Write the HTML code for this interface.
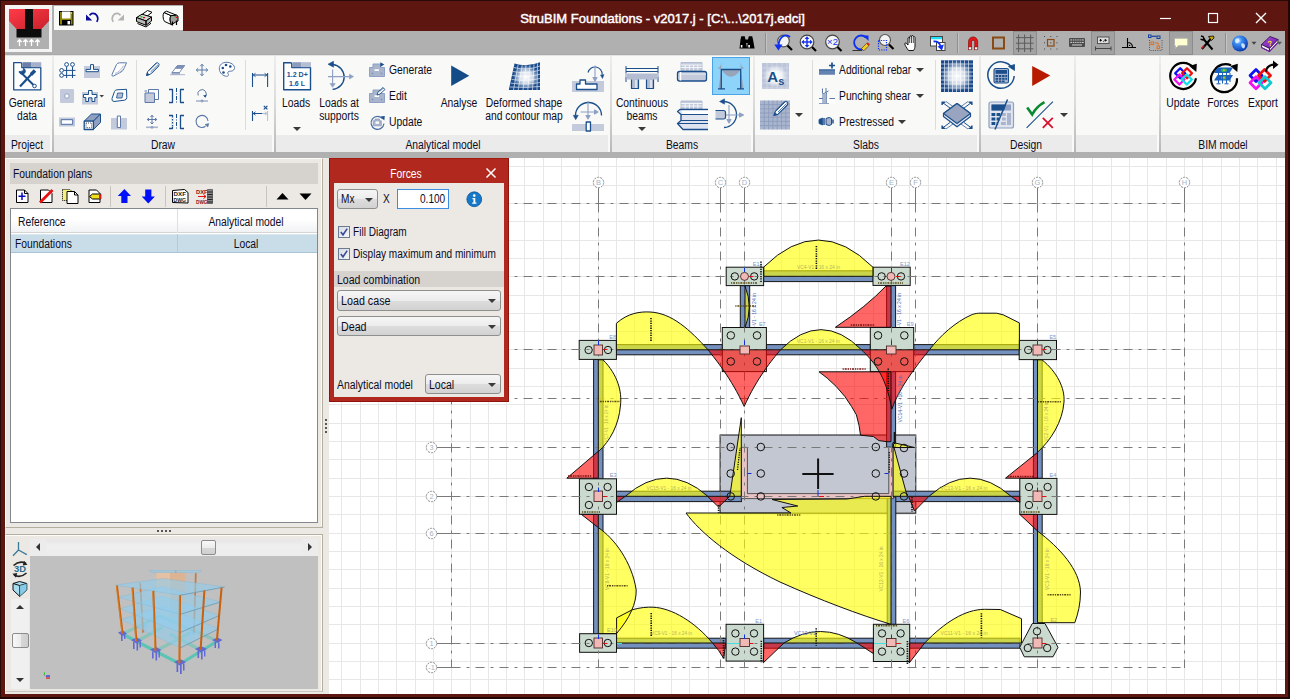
<!DOCTYPE html>
<html><head><meta charset="utf-8"><title>StruBIM Foundations</title>
<style>
*{box-sizing:border-box;margin:0;padding:0}
html,body{width:1290px;height:699px;overflow:hidden}
body{position:relative;background:#5e1611;font-family:"Liberation Sans",sans-serif;font-size:12px;color:#0c0c1e}
.a{position:absolute}
.t{position:absolute;white-space:nowrap;font-size:12px;line-height:14px;height:14px;transform:scaleX(.86);transform-origin:0 50%}
.tc{position:absolute;white-space:nowrap;font-size:12px;line-height:14px;height:14px;transform:translateX(-50%) scaleX(.86);transform-origin:50% 50%}
.gs{position:absolute;top:56px;width:2px;height:96px;background:linear-gradient(#ededed,#dadada 50%,#b9b9b9)}
.is{position:absolute;top:60px;width:1px;height:70px;background:#dcdcdc}
.gl{position:absolute;top:135px;height:17px;background:#ebebeb}
.dd{position:absolute;height:20px;border:1px solid #8e8f8f;border-radius:3px;background:linear-gradient(#f6f6f6 0%,#ececec 50%,#dddddd 51%,#d2d2d2 100%)}
.arr{position:absolute;width:0;height:0;border-left:4px solid transparent;border-right:4px solid transparent;border-top:4px solid #3a3a3a}
.hl{position:absolute;background:#a2a2a2;border:1px solid #8c8c8c}
svg{position:absolute;overflow:visible}
</style></head><body>
<!-- outer frame -->
<div class="a" style="left:0;top:0;width:1290px;height:699px;border:1px solid #2a0a08;border-right:2px solid #220604;border-bottom:2px solid #220604"></div>
<!-- gray band behind logo/toolbar -->
<div class="a" style="left:5px;top:5px;width:178px;height:50px;background:#b0b0b0"></div>
<div class="a" style="left:5px;top:31px;width:1280px;height:24px;background:#b0b0b0"></div>
<!-- logo -->
<div class="a" style="left:5px;top:5px;width:47px;height:47px;background:#f4f4f4"></div>
<div class="a" style="left:9px;top:9px;width:40px;height:40px;background:#b0b0b0"></div>
<svg style="left:9px;top:9px" width="40" height="40" viewBox="0 0 40 40">
<defs><linearGradient id="lg1" x1="0" y1="0" x2="1" y2="1"><stop offset="0" stop-color="#ff3c48"/><stop offset="1" stop-color="#c8202c"/></linearGradient></defs>
<path d="M0 0H40V12L32.5 20H7.5L0 12Z" fill="url(#lg1)"/>
<rect x="16" y="0" width="8" height="21" fill="#0c0c0c"/>
<rect x="7.5" y="20" width="25" height="8.5" fill="#0c0c0c"/>
<g stroke="#fff" stroke-width="1.3" fill="none"><path d="M10.5 37V31M8.3 33l2.2-2.4 2.2 2.4M16.5 37V31M14.3 33l2.2-2.4 2.2 2.4M22.5 37V31M20.3 33l2.2-2.4 2.2 2.4M28.5 37V31M26.3 33l2.2-2.4 2.2 2.4"/></g>
</svg>
<!-- QAT -->
<div class="a" style="left:54px;top:6px;width:129px;height:24px;background:#f9f9f7"></div>
<!-- title -->
<div class="a" id="title" style="left:519px;top:11px;width:287px;height:16px;line-height:16px;font-size:13px;color:#fff;white-space:nowrap;text-align:center;-webkit-text-stroke:0.45px #fff">StruBIM Foundations - v2017.j - [C:\...\2017j.edci]</div>
<!-- window controls -->
<svg style="left:1150px;top:8px" width="130" height="22" viewBox="1150 8 130 22" fill="none" stroke="#fff" stroke-width="1.2">
<path d="M1160 18.5H1171"/><rect x="1208.5" y="13.5" width="9" height="9"/><path d="M1256 13L1266 23M1266 13L1256 23" stroke-width="1.4"/>
</svg>
<!-- ribbon -->
<div class="a" style="left:5px;top:55px;width:1280px;height:97px;background:#f9f9f7"></div>
<div class="a" style="left:5px;top:54px;width:1280px;height:1px;background:#a9a9a9"></div><div class="a" style="left:5px;top:55px;width:1280px;height:1px;background:#e4e4e4"></div>
<!-- group label bands -->
<div class="gl" style="left:5px;width:45px"></div>
<div class="gl" style="left:54px;width:218px"></div>
<div class="gl" style="left:276px;width:332px"></div>
<div class="gl" style="left:612px;width:139px"></div>
<div class="gl" style="left:755px;width:222px"></div>
<div class="gl" style="left:981px;width:91px"></div>
<div class="gl" style="left:1076px;width:81px"></div>
<div class="gl" style="left:1161px;width:124px"></div>
<div class="gs" style="left:51.5px"></div><div class="gs" style="left:273.5px"></div><div class="gs" style="left:609.5px"></div><div class="gs" style="left:752.5px"></div><div class="gs" style="left:978.5px"></div><div class="gs" style="left:1073.5px"></div><div class="gs" style="left:1158.5px"></div>
<div class="is" style="left:136px"></div><div class="is" style="left:245px"></div><div class="is" style="left:812px"></div><div class="is" style="left:935px"></div>
<span class="tc" style="left:27px;top:138px">Project</span>
<span class="tc" style="left:163px;top:138px">Draw</span>
<span class="tc" style="left:443px;top:138px">Analytical model</span>
<span class="tc" style="left:682px;top:138px">Beams</span>
<span class="tc" style="left:866px;top:138px">Slabs</span>
<span class="tc" style="left:1026px;top:138px">Design</span>
<span class="tc" style="left:1223px;top:138px">BIM model</span>
<!-- ribbon big-button text -->
<span class="tc" style="left:27px;top:96px">General</span><span class="tc" style="left:27px;top:109px">data</span>
<span class="tc" style="left:296px;top:96px">Loads</span><div class="arr" style="left:293px;top:127px"></div>
<span class="tc" style="left:339px;top:96px">Loads at</span><span class="tc" style="left:339px;top:109px">supports</span>
<span class="t" style="left:389px;top:63px">Generate</span><span class="t" style="left:389px;top:89px">Edit</span><span class="t" style="left:389px;top:115px">Update</span>
<span class="tc" style="left:459px;top:96px">Analyse</span>
<span class="tc" style="left:524px;top:96px">Deformed shape</span><span class="tc" style="left:524px;top:109px">and contour map</span>
<span class="tc" style="left:642px;top:96px">Continuous</span><span class="tc" style="left:642px;top:109px">beams</span><div class="arr" style="left:638px;top:127px"></div>
<span class="t" style="left:839px;top:63px">Additional rebar</span><div class="arr" style="left:916px;top:68px"></div>
<span class="t" style="left:839px;top:89px">Punching shear</span><div class="arr" style="left:916px;top:94px"></div>
<span class="t" style="left:839px;top:115px">Prestressed</span><div class="arr" style="left:898px;top:120px"></div>
<div class="arr" style="left:795px;top:113px"></div><div class="arr" style="left:1060px;top:113px"></div>
<span class="tc" style="left:1183px;top:96px">Update</span><span class="tc" style="left:1223px;top:96px">Forces</span><span class="tc" style="left:1263px;top:96px">Export</span>
<!-- gray band below ribbon -->
<div class="a" style="left:5px;top:152px;width:1280px;height:6px;background:#b0b0b0"></div>
<!-- top toolbar highlight boxes -->
<div class="hl" style="left:1013px;top:31px;width:24px;height:24px"></div>
<div class="hl" style="left:1091px;top:31px;width:24px;height:24px"></div>
<div class="hl" style="left:1169px;top:31px;width:24px;height:24px"></div>
<div class="a" style="left:765px;top:33px;width:1px;height:20px;background:#8e8e8e"></div><div class="a" style="left:766px;top:33px;width:1px;height:20px;background:#c4c4c4"></div>
<div class="a" style="left:957px;top:33px;width:1px;height:20px;background:#8e8e8e"></div><div class="a" style="left:958px;top:33px;width:1px;height:20px;background:#c4c4c4"></div>
<div class="a" style="left:1225px;top:33px;width:1px;height:20px;background:#8e8e8e"></div><div class="a" style="left:1226px;top:33px;width:1px;height:20px;background:#c4c4c4"></div>
<svg style="left:0;top:0" width="1290" height="58" viewBox="0 0 1290 58">
<!-- save -->
<rect x="59.5" y="11.5" width="13.5" height="13.5" fill="#8a8200" stroke="#000" stroke-width="1"/>
<rect x="62" y="11.5" width="8.5" height="7" fill="#fff"/><rect x="62" y="20" width="9" height="5" fill="#000"/><rect x="67.5" y="21" width="2.6" height="3.4" fill="#fff"/><rect x="71" y="12.5" width="1" height="1" fill="#fff"/>
<!-- undo -->
<path d="M96.8 21.8C99.5 17 96 12.6 91.6 13.6L89.5 15.2" fill="none" stroke="#0c0c9c" stroke-width="1.7"/><path d="M86 14.5V20.6H92.3Z" fill="#0c0c9c"/>
<!-- redo -->
<path d="M113.2 21.8C110.5 17 114 12.6 118.4 13.6L120.5 15.2" fill="none" stroke="#b4b4b4" stroke-width="1.7"/><path d="M124 14.5V20.6H117.7Z" fill="#b4b4b4"/>
<!-- printer -->
<g stroke="#000" stroke-width="1" stroke-linejoin="round">
<path d="M142 14.5L147.5 10.5L152 12.3L146.5 16.6Z" fill="#fff"/>
<path d="M136.5 17.5L142 14.2L151.5 17L146 21Z" fill="#d8d8d8"/>
<path d="M136.5 17.5V21.5L146 25.3V21ZM146 21V25.3L151.5 21V17Z" fill="#b8b8b8"/>
<path d="M137.5 23.5L146 27L151 23.2" fill="none"/>
</g>
<rect x="140.5" y="16.2" width="2" height="1.2" fill="#00c000"/><rect x="143" y="17" width="2" height="1.2" fill="#e00000"/>
<!-- plotter -->
<g stroke="#000" stroke-width="1" stroke-linejoin="round">
<path d="M164 12.5C162.5 14 162.8 19.5 164.6 21.5L171.5 24.6C169.8 22.5 169.6 17.5 171 15.6Z" fill="#fff"/>
<path d="M164 12.5L166.5 11.2L176.5 15.2L171 15.6Z" fill="#fff"/>
<path d="M171 15.6L176.5 15.2L178 16.2V21L175.5 22.2L171.5 24.6C169.8 22.5 169.6 17.5 171 15.6Z" fill="#a0a0a0"/>
<path d="M172.5 21.5V25.5M176.5 20.5V25" fill="none" stroke-width="1.2"/>
</g>
<rect x="174.6" y="16.2" width="1.5" height="1.2" fill="#00c000"/><rect x="176" y="16.8" width="1.3" height="1.2" fill="#e00000"/>
<!-- binoculars -->
<g fill="#000"><path d="M741.3 36.300h3.400l.8 3.200 1.600 9h-7.600l1-9zM748.800 36.300h3.400l.8 3.200 1.600 9H747l1-9z"/><rect x="744.500" y="39.500" width="5" height="3.500"/></g>
<rect x="740.800" y="45" width="1.600" height="2.500" fill="#fff"/><rect x="748.300" y="45" width="1.600" height="2.500" fill="#fff"/>
<!-- zoom previous -->
<circle cx="783.5" cy="41" r="5.8" fill="#f4f4f4" stroke="#555" stroke-width="1.2"/><path d="M787.5 45.5L792 50" stroke="#000" stroke-width="2.2"/>
<path d="M790 37C786 33.5 779.5 36 778.5 45" fill="none" stroke="#1030f0" stroke-width="1.8"/><path d="M774.3 44.5H782.5L778.4 50.5Z" fill="#1030f0"/>
<!-- zoom extents -->
<circle cx="807" cy="42" r="6.8" fill="#f4f4f4" stroke="#444" stroke-width="1.2"/><path d="M812 47L816 51" stroke="#000" stroke-width="2.2"/>
<g fill="#1030f0"><path d="M807 36.3l2.3 2.7h-4.6zM807 47.7l2.3-2.7h-4.6zM801.3 42l2.7-2.3v4.6zM812.7 42l-2.7-2.3v4.6z"/><rect x="806.3" y="38.5" width="1.4" height="7"/><rect x="803.5" y="41.3" width="7" height="1.4"/></g>
<!-- zoom x2 -->
<circle cx="832.5" cy="42" r="6.8" fill="#f4f4f4" stroke="#444" stroke-width="1.2"/><path d="M837.5 47L841.5 51" stroke="#000" stroke-width="2.2"/>
<text x="832.5" y="45.3" font-size="9.5" fill="#1030f0" text-anchor="middle" font-family="Liberation Sans">×2</text>
<!-- redraw -->
<path d="M866 37.5A7 7 0 1 0 866.5 47" fill="none" stroke="#1030f0" stroke-width="1.8"/><path d="M863 35.5H868.5V41Z" fill="#1030f0"/>
<path d="M852.5 50.5H862" stroke="#333" stroke-width="1"/><path d="M861.5 48.5L866.5 43.5L868.8 45.8L863.8 50.8Z" fill="#f0d020" stroke="#604000" stroke-width=".7"/><path d="M866.5 43.5l1.2-1.2 2.3 2.3-1.2 1.2z" fill="#e02020"/>
<!-- zoom window -->
<circle cx="885" cy="40" r="5.5" fill="#f4f4f4" stroke="#555" stroke-width="1.2"/><path d="M889 44.5L893.5 49" stroke="#000" stroke-width="2.2"/>
<rect x="878.5" y="40.5" width="8" height="9.5" fill="none" stroke="#1030f0" stroke-width="1.2" stroke-dasharray="1.2 1.2"/>
<!-- hand -->
<path d="M908.5 50.5C906.5 47.5 905 45.5 904.8 44C904.6 42.8 906 42.6 906.8 43.6L908 45V38.5C908 37.2 909.6 37.2 909.7 38.5V36.8C909.8 35.6 911.4 35.6 911.5 36.8V36.3C911.6 35.2 913.2 35.2 913.3 36.4V37.3C913.4 36.3 914.9 36.3 915 37.5V46C915 48 914.2 49.5 913.5 50.5Z" fill="#fff" stroke="#000" stroke-width=".9" stroke-linejoin="round"/>
<path d="M909.7 38.5V43M911.5 37V43M913.3 37.5V43" stroke="#000" stroke-width=".7" fill="none"/>
<!-- window arrow -->
<rect x="930.5" y="36.5" width="12" height="9.5" fill="#fff" stroke="#444" stroke-width="1"/><rect x="931" y="37" width="11" height="2.3" fill="#20e0ff"/>
<rect x="936.5" y="42.5" width="8.5" height="8" fill="#fff" stroke="#444" stroke-width="1"/>
<path d="M933.5 41.5C937 41 939.5 43 940.5 46" fill="none" stroke="#1030f0" stroke-width="1.8"/><path d="M937.5 46.5L943.8 44.6L942 50.5Z" fill="#1030f0"/>
<!-- magnet -->
<path d="M968.5 49.5V41.5A4.6 4.6 0 0 1 977.7 41.5V49.5H974.7V41.8A1.6 1.6 0 0 0 971.5 41.8V49.5Z" fill="#e01818" stroke="#800000" stroke-width=".6"/><rect x="968.5" y="47" width="3" height="2.8" fill="#fff" stroke="#800000" stroke-width=".5"/><rect x="974.7" y="47" width="3" height="2.8" fill="#fff" stroke="#800000" stroke-width=".5"/>
<!-- square -->
<rect x="993" y="37.5" width="11" height="11" fill="none" stroke="#8a4a14" stroke-width="2"/>
<!-- grid -->
<path d="M1018.6 34.5V52M1024.6 34.5V52M1030.6 34.5V52M1016 37.6H1033.5M1016 43.2H1033.5M1016 48.8H1033.5" stroke="#5c5c5c" stroke-width="1" fill="none"/>
<!-- dotted square -->
<rect x="1047.5" y="39.5" width="6.5" height="6.5" fill="none" stroke="#8a4a14" stroke-width="1.2"/><rect x="1050.2" y="42.2" width="1.2" height="1.2" fill="#8a4a14"/>
<g fill="#444"><rect x="1044" y="36" width="1" height="1"/><rect x="1050.3" y="36" width="1" height="1"/><rect x="1056.5" y="36" width="1" height="1"/><rect x="1044" y="42.3" width="1" height="1"/><rect x="1056.5" y="42.3" width="1" height="1"/><rect x="1044" y="48.5" width="1" height="1"/><rect x="1050.3" y="48.5" width="1" height="1"/><rect x="1056.5" y="48.5" width="1" height="1"/></g>
<!-- keyboard -->
<rect x="1069" y="38" width="16" height="9" rx="1" fill="#4c4c4c"/><g fill="#c8c8c8"><rect x="1070.3" y="39.4" width="13.4" height="1.1"/><rect x="1070.3" y="41.9" width="13.4" height="1.1"/><rect x="1072" y="44.4" width="10" height="1.1"/></g>
<g stroke="#4c4c4c" stroke-width=".8"><path d="M1072.5 39v4.5M1074.7 39v4.5M1076.9 39v4.5M1079.1 39v4.5M1081.3 39v4.5"/></g>
<!-- dimension -->
<rect x="1097.5" y="37" width="11.5" height="6.5" fill="#dcdcdc" stroke="#555" stroke-width="1"/><path d="M1100.5 39v2.5M1099.5 40.3h2.5M1103 41.3h.8M1105.3 39v2.5M1104.4 40.3h2.5" stroke="#000" stroke-width=".9"/>
<path d="M1095.5 48.5H1111M1095.5 46.5v4M1111 46.5v4" stroke="#444" stroke-width="1" fill="none"/>
<!-- angle -->
<path d="M1122 47.5H1136M1127.5 38v9.5M1127.5 42.5C1130.5 42.5 1132.5 44.5 1132.5 47.5" stroke="#000" stroke-width="1.1" fill="none"/><rect x="1129" y="44.8" width="1.2" height="1.2" fill="#000"/>
<!-- ortho -->
<rect x="1148.5" y="35" width="2.5" height="2.5" fill="none" stroke="#1040a0" stroke-width="1"/><rect x="1157" y="36" width="3" height="2.5" fill="none" stroke="#1040a0" stroke-width="1"/><path d="M1151.5 36.3h5" stroke="#1040a0" stroke-width="1.2"/>
<rect x="1151" y="42" width="2.6" height="2.6" fill="none" stroke="#e07020" stroke-width="1"/><rect x="1157" y="46" width="2.6" height="2.6" fill="none" stroke="#e07020" stroke-width="1"/><path d="M1155 43h3.2v2" stroke="#e07020" stroke-width="1" fill="none"/>
<path d="M1149.5 40v10.5H1162" stroke="#555" stroke-width="1" stroke-dasharray="1 1.3" fill="none"/><path d="M1162 40v10.5" stroke="#555" stroke-width="1" stroke-dasharray="1 1.3" fill="none"/>
<!-- speech -->
<path d="M1175.5 38.2H1186.8Q1187.8 38.2 1187.8 39.2V44.8Q1187.8 45.8 1186.8 45.8H1178.5L1175.3 48.6V45.8Q1174.5 45.6 1174.5 44.8V39.2Q1174.5 38.2 1175.5 38.2Z" fill="#ffffd2" stroke="#b0b0b0" stroke-width="1"/>
<!-- tools -->
<path d="M1202 49L1211 38.5" stroke="#000" stroke-width="2"/><path d="M1208.5 36.5L1213.5 36L1214 38L1211.5 40.5Z" fill="#c8a800" stroke="#000" stroke-width=".8"/>
<path d="M1212.5 49.5L1203.5 39" stroke="#000" stroke-width="2"/><path d="M1201 36l2 .5 1 2-1.5 1.5-2-.8M1203 40l1.8-1.6" stroke="#000" stroke-width="1.4" fill="none"/>
<path d="M1204 45.5L1201.5 48.5" stroke="#d02020" stroke-width="1.6"/>
<!-- globe -->
<defs><radialGradient id="gl" cx=".38" cy=".32" r=".7"><stop offset="0" stop-color="#c8e4ff"/><stop offset=".35" stop-color="#3c8cf0"/><stop offset="1" stop-color="#0838b0"/></radialGradient>
<linearGradient id="bk" x1="0" y1="0" x2="1" y2="1"><stop offset="0" stop-color="#b050e0"/><stop offset="1" stop-color="#6018a0"/></linearGradient></defs>
<circle cx="1240" cy="43.5" r="8" fill="url(#gl)"/><path d="M1235.5 39c2-1 3.5-.5 4 1s-1 3-2.5 3.200-2.500-2-1.500-4.200zM1241.500 43.500c2-.5 3.500 .5 3.500 2.500s-1.500 3-2.500 2-1.800-3.500-1-4.500z" fill="#e8f4ff" opacity=".85"/>
<path d="M1251.500 41.800h5l-2.500 3z" fill="#444"/>
<!-- book -->
<path d="M1261.500 44.500L1270 36.500L1278 39.500L1269.500 48.500Z" fill="url(#bk)" stroke="#30084c" stroke-width=".8" stroke-linejoin="round"/>
<path d="M1261.500 44.500V47.500L1269.500 51.500V48.500ZM1269.500 48.500V51.500L1278 42.500V39.500Z" fill="#f0f0f0" stroke="#30084c" stroke-width=".8" stroke-linejoin="round"/>
<path d="M1261.500 47.500L1269.500 51.500L1278 42.500" fill="none" stroke="#7020a8" stroke-width="1.2"/>
<text x="1270" y="46" font-size="7.500" font-weight="bold" fill="#ffe020" text-anchor="middle" font-family="Liberation Sans" transform="rotate(-12 1270 44)">?</text>
<path d="M1277 41.800h5l-2.500 3z" fill="#555"/>
</svg>
<svg style="left:0;top:55px" width="620" height="100" viewBox="0 55 620 100">
<defs>
<radialGradient id="glow" cx=".5" cy=".5" r=".5"><stop offset="0" stop-color="#fff" stop-opacity="1"/><stop offset=".5" stop-color="#fff" stop-opacity=".8"/><stop offset="1" stop-color="#fff" stop-opacity="0"/></radialGradient>
</defs>
<g fill="none" stroke="#1b4f8c" stroke-width="1.3" stroke-linejoin="round" stroke-linecap="butt">
<!-- General data folder -->
<path d="M13.700 62.700H20.500Q21.800 62.700 21.800 64V67.600H40.800V89.800H13.700Z" fill="#fff"/>
<rect x="22.500" y="62.200" width="9" height="5" fill="#6c7fa9" stroke="none"/><rect x="31.500" y="62.200" width="9.800" height="5" fill="#a5b0ca" stroke="none"/>
<!-- wrench + screwdriver -->
<path d="M20 86.500L33 72.500" stroke-width="2.200"/><path d="M31 74.500L35 70.500" stroke-width="3.600"/>
<path d="M21 72.500L34 85.500" stroke-width="2"/>
<path d="M19 71.500a3.200 3.200 0 1 0 4.500-3.300l-.3 2.500-2 .7z" fill="#1b4f8c" stroke-width=".8"/><circle cx="34.500" cy="86" r="1.800" fill="#fff" stroke-width="1"/>
<!-- grid with circles -->
<g stroke-width="1"><path d="M66.600 66.500V78M72.500 66.500V78M63.500 70.400H75.500M63.500 75.400H75.500"/><circle cx="66.600" cy="64.500" r="1.900" fill="#fff"/><circle cx="72.500" cy="64.500" r="1.900" fill="#fff"/><circle cx="61.600" cy="70.400" r="1.900" fill="#fff"/><circle cx="61.600" cy="75.400" r="1.900" fill="#fff"/></g>
<!-- footing strip -->
<rect x="84" y="66" width="16" height="12" fill="#c3cadb" stroke="none"/><path d="M86 71.700V69.400H90.600V64.600H93.500V69.400H98.400V71.700Z" fill="#fff" stroke-width="1"/>
<!-- slab sketch -->
<g stroke-width="1" stroke="#5b78a8"><path d="M112 74.500L116.500 64.500Q117.500 62.800 119.500 62.800H126.500L124 68.500Q123 71 121 72L113.500 76Q111.500 76.500 112 74.500Z" fill="#fff"/><path d="M115 73.500C119 72 121.500 69.500 123.500 65.500M116.500 74C120 72.500 122.500 70.500 124.500 67" stroke="#b4bdd2"/></g>
<!-- pile square -->
<rect x="60" y="89" width="14" height="14" rx="1" fill="#c3cadb" stroke="none"/><circle cx="66.900" cy="96" r="2.200" fill="#fff" stroke="#8ea0c4" stroke-width="1"/>
<!-- footing cross -->
<rect x="82" y="92" width="16" height="12.500" fill="#c3cadb" stroke="none"/><path d="M88.500 90.500H92V94.500H96.800V97.500H94.800V101.500H92V97.800H88.500V101.500H85.800V97.500H83.500V94.500H88.500Z" fill="#fff" stroke-width="1"/>
<path d="M99.500 95h4.500l-2.250 2.600z" fill="#444" stroke="none"/>
<!-- slab with square -->
<g stroke-width="1"><path d="M112 98.500L114.500 91.500Q115 90 117 89.800L126.500 89.300L126.800 97.500Q126.500 100 124.500 100.200L114 101.500Q111.500 101.200 112 98.500Z" fill="#fff"/><path d="M117.500 93H123L122 98H116.500Z" fill="#b4bdd2" stroke-width=".8"/></g>
<!-- bar -->
<rect x="59" y="117.500" width="16" height="9" fill="#c3cadb" stroke="none"/><rect x="61.200" y="119.700" width="11.500" height="4.600" fill="#fff" stroke-width="1" stroke="#4a6ea4"/>
<!-- 3D box -->
<path d="M84.200 121.200L91.500 114H100.500L93.400 121.200Z" fill="#8f9fc0" stroke-width="1"/><path d="M93.400 121.200L100.500 114V122.500L93.400 129.500Z" fill="#8f9fc0" stroke-width="1"/>
<rect x="84.200" y="121.200" width="9.200" height="8.300" fill="#fff" stroke-width="1.300"/><rect x="86" y="123" width="5.600" height="4.700" fill="none" stroke="#222" stroke-width=".8" stroke-dasharray="1 1"/>
<!-- wall -->
<rect x="111" y="118" width="16" height="11.500" fill="#c3cadb" stroke="none"/><rect x="117.300" y="116" width="3.200" height="11.500" fill="#fff" stroke="#5b78a8" stroke-width="1"/>
<!-- pencil -->
<path d="M146.500 75.500L147.800 71.300L156 63.200Q157.500 62.200 158.600 63.400Q159.600 64.600 158.600 66L150.500 74.200Z" fill="#fff" stroke-width="1"/><path d="M146.500 75.500L147.300 72.800L149.200 74.700Z" fill="#1b4f8c" stroke-width=".6"/><path d="M149 70.500L156.500 63.200M150.500 72L158 64.700M151.800 73.300L158.800 66.200" stroke-width=".7"/>
<!-- eraser -->
<g stroke="#7d8fb6" stroke-width="1"><path d="M172 72.500L177.500 65.500H184.500L179.500 72.500Z" fill="#fff"/><path d="M177.500 65.500H184.500L182.500 68.300H175.300Z" fill="#7d8fb6"/><path d="M170 74.700H185" stroke="#a9b4cd"/><path d="M172 72.500V73.800H179.500V72.500" fill="none"/></g>
<!-- move arrows -->
<g stroke="#5b78a8" stroke-width="1"><path d="M202 64.500V75.500M196.500 70H207.500"/><path d="M200.300 66.200L202 64.200L203.700 66.200M200.300 73.800L202 75.800L203.700 73.800M198.200 68.300L196.200 70L198.200 71.700M205.800 68.300L207.800 70L205.800 71.700"/></g>
<!-- palette -->
<path d="M227 62.300C222.500 62 219 65 219.300 69C219.600 73 223 76 226.500 76.300C228.500 76.400 229 75 228 73.800C227 72.300 228.500 71 230.500 71.200C233 71.300 234.800 69.500 234.500 67.300C234 64.300 230.800 62.500 227 62.300Z" fill="#fff" stroke="#5b78a8" stroke-width="1"/>
<g fill="#1b4f8c" stroke="none"><circle cx="222.800" cy="68" r="1.300"/><circle cx="226" cy="65" r="1.300"/><circle cx="230.300" cy="66.500" r="1.300"/><circle cx="223.500" cy="72.500" r="1.300"/></g>
<!-- copy -->
<g stroke="#5b78a8" stroke-width="1"><rect x="148.500" y="89.500" width="10" height="10" fill="#fff"/><rect x="145" y="93" width="9.500" height="9.500" fill="#c3cadb"/><path d="M144.500 91h2.500" /></g>
<!-- mirror 1 -->
<g stroke-width="1.300"><path d="M169 89.500H172.500V102.500H169M184 89.500H180.500V102.500H184"/><path d="M176.500 88V104" stroke-dasharray="4 1.500 1 1.500" stroke-width="1"/></g>
<!-- rotate base -->
<g stroke="#5b78a8" stroke-width="1"><path d="M198.200 95.500A4.200 4.200 0 1 1 205 96.800"/><path d="M203.500 95.500L205.300 97.300L206.300 94.800" fill="#1b4f8c" stroke="#1b4f8c" stroke-width=".8"/><path d="M196 101H208" stroke="#a9b4cd" stroke-width="1.600"/><circle cx="202" cy="101" r="1.400" fill="#8ea0c4" stroke="none"/></g>
<!-- move base -->
<g stroke="#5b78a8" stroke-width="1"><path d="M152 115.500V123M147.500 119.500H156.500"/><path d="M150.500 117L152 115.200L153.500 117M149 118L147.200 119.500L149 121M155 118L156.800 119.500L155 121M150.500 122.300L152 124L153.500 122.300"/><path d="M146 127.300H158" stroke="#a9b4cd" stroke-width="1.600"/><circle cx="152" cy="127.300" r="1.400" fill="#8ea0c4" stroke="none"/></g>
<!-- mirror 2 -->
<g stroke-width="1.300"><path d="M169 115.500H172.500V128.500H169M184 115.500H180.500V128.500H184"/><path d="M172.500 117.500V127" stroke="#f9f9f7" stroke-width="1.500" stroke-dasharray="1.500 1.500"/><path d="M176.500 114V130" stroke-dasharray="4 1.500 1 1.500" stroke-width="1"/></g>
<!-- rotate -->
<g stroke="#5b78a8" stroke-width="1.100"><path d="M205.500 126.300A6 6 0 1 1 208 121"/><path d="M205 124.500L207.800 127L208.800 123.600Z" fill="#5b78a8" stroke-width=".6"/></g>
<!-- dims -->
<g stroke-width="1.100"><path d="M252.500 73V87M267.600 73V87M253 75H267"/><path d="M255.500 73.300L253.200 75L255.500 76.700M264.600 73.300L266.900 75L264.600 76.700" stroke-width=".9"/>
<path d="M252.500 111V121M253 113.500H262.500"/><path d="M255.500 111.800L253.200 113.500L255.500 115.200" stroke-width=".9"/><path d="M267.600 111V121M262.500 113.500H267M264.800 111.800L267 113.500L264.800 115.200" stroke="#b4bdd2" stroke-width="1"/><path d="M263.800 105.800L267.400 109.400M267.400 105.800L263.800 109.400" stroke-width="1.200"/></g>
<!-- Loads folder -->
<path d="M283.700 62.700H290.500Q291.800 62.700 291.800 64V67.600H310.500V89.800H283.700Z" fill="#fff" stroke-width="1.400"/>
<rect x="292.500" y="62.200" width="9" height="5" fill="#8d9bbd" stroke="none"/><rect x="301.500" y="62.200" width="9.500" height="5" fill="#b4bdd2" stroke="none"/>
<!-- Loads at supports -->
<path d="M333 64.500A12.500 12.500 0 0 1 332.500 89.400" stroke-width="1.400"/><path d="M328 64.200L333.500 61.300V67.200Z" fill="#1b4f8c" stroke-width=".6"/>
<g stroke="#8ea0c4" stroke-width="1.100"><path d="M332.600 69.500V84.500M328 76.600H350"/><path d="M330 83.500H335.200L332.600 87.300ZM349.500 74.200V79L353.500 76.600Z" fill="#8ea0c4" stroke-width=".6"/></g>
<!-- Generate -->
<g stroke="#8ea0c4" stroke-width="1"><path d="M369.500 67.500H373V64H380.500V67.500H384.500V76.500H369.500Z" fill="#a9b4cd"/><rect x="374.500" y="69.300" width="4.500" height="1.700" fill="#fff" stroke="none"/><path d="M371.500 73.500l2 0M380.500 73.500l2 0M372.500 72.500v2M381.500 72.500v2" stroke="#8194bb" stroke-width=".8"/></g><path d="M380.300 62.300V67L384.300 64.600Z" fill="#1b4f8c" stroke="none"/>
<!-- Edit -->
<g stroke="#8ea0c4" stroke-width="1"><path d="M369.500 93.500H373V90H380.500V93.500H384.500V102.500H369.500Z" fill="#a9b4cd"/><rect x="374.500" y="95.300" width="4.500" height="1.700" fill="#fff" stroke="none"/><path d="M371.500 99.500l2 0M380.500 99.500l2 0M372.500 98.500v2M381.500 98.500v2" stroke="#8194bb" stroke-width=".8"/></g>
<path d="M377 95L378 92L383 87.500L385 89.500L380 94Z" fill="#fff" stroke="#1b4f8c" stroke-width=".9"/><path d="M379.500 91.500L384 87.800" stroke-width=".6"/>
<!-- Update -->
<path d="M382.800 119A6.500 6.500 0 1 0 384 123.500" stroke="#4a6ea4" stroke-width="1.200"/><path d="M380.500 116.500L384.800 116L384.300 120.500Z" fill="#1b4f8c" stroke="none"/>
<g stroke="#8ea0c4" stroke-width=".8"><path d="M373.200 120.800H375V119H379.500V120.800H381.300V125.800H373.200Z" fill="#a9b4cd"/><rect x="375.500" y="121.500" width="3.500" height="2.300" fill="#fff" stroke="none"/></g>
<!-- Analyse -->
<path d="M451.200 65.600V86L469.300 75.700Z" fill="#134c86" stroke="none"/>
<!-- Deformed shape -->
<path d="M514.500 63.600Q527 67.500 540 62.300V90H508.800Z" fill="#1a4a8a" stroke="none"/>
<g stroke="#dfe8f4" stroke-width=".8" opacity=".9"><path d="M518.200 64.500L513.500 90M522.200 65.200L518.200 90M526 65.400L523 90M530 65.200L527.800 90M534 64.300L532.500 90M537.500 63.300L537 90"/><path d="M513.800 67.500Q527 71 540 66M513 71.500Q527 74.500 540 70M512.200 75.500Q527 78 540 74.200M511.500 79.500Q527 81.500 540 78.500M510.800 83.200Q527 85 540 82.500M510 87Q527 88 540 86.500"/></g>
<ellipse cx="526" cy="77" rx="13" ry="12" fill="url(#glow)" stroke="none"/>
<!-- footing rotate icons -->
<rect x="572" y="81" width="32" height="11" fill="#c3cadb" stroke="none"/><path d="M576.500 89.500V84H580V80H585.500V84H597V89.500Z" fill="#fff" stroke-width="1.300"/>
<path d="M588 72.500A7.200 7.200 0 0 1 602.200 74.500" stroke-width="1.100"/><path d="M600.500 75L602.500 78.500L604 74.600Z" fill="#1b4f8c" stroke-width=".5"/>
<path d="M595 65.500V80M593 77.500H597L595 81Z" stroke="#8ea0c4" stroke-width="1.100" fill="#8ea0c4"/>
<rect x="572" y="124" width="32" height="7" fill="#c3cadb" stroke="none"/><rect x="586.200" y="122" width="4.300" height="9" fill="#fff" stroke-width="1.300"/>
<path d="M575.500 115.500A13 13 0 0 1 601.500 115.500" stroke-width="1.300"/><path d="M573.200 115.300H578.300L575.700 119.800Z" fill="#1b4f8c" stroke-width=".5"/>
<g stroke="#8ea0c4" stroke-width="1.100" fill="#8ea0c4"><path d="M588 101V117M586 115.500H590L588 119Z"/><path d="M580.500 112H595M594.500 110V114L598 112Z"/></g>
</g>
<g font-family="Liberation Sans" font-weight="bold" font-size="6.400" fill="#1b4f8c" text-anchor="middle"><text x="297.300" y="77.200" textLength="21" lengthAdjust="spacingAndGlyphs">1.2 D+</text><text x="297" y="85.600" textLength="16" lengthAdjust="spacingAndGlyphs">1.6 L</text></g>
</svg>
<div class="a" style="left:712px;top:57px;width:38px;height:38px;background:#8dd3fa;border:1px solid #4aa3e4"></div>
<svg style="left:610px;top:55px" width="680" height="100" viewBox="610 55 680 100">
<defs>
<radialGradient id="glow2" cx=".5" cy=".5" r=".5"><stop offset="0" stop-color="#fff" stop-opacity="1"/><stop offset=".5" stop-color="#fff" stop-opacity=".8"/><stop offset="1" stop-color="#fff" stop-opacity="0"/></radialGradient>
</defs>
<g fill="none" stroke="#1b4f8c" stroke-width="1.200" stroke-linejoin="round">
<!-- continuous beams -->
<path d="M626 68.500H658M626 71.500H658" stroke-width="1"/><path d="M626 66V82M658 66V82" stroke-width="1" stroke-dasharray="7.500 1 1 1"/>
<path d="M626.500 73.500H657.500V79.500H653.500V88.500H646.500V79.500H638.500V88.500H631.500V79.500H626.500Z" fill="#b4bdd2" stroke="none"/>
<path d="M631.500 79.500V88.500H638.500V79.500M646.500 79.500V88.500H653.500V79.500" stroke-width="1.200"/><path d="M636 80V88M651 80V88" stroke="#e8ecf4" stroke-width="1.500"/>
<!-- table + beam -->
<rect x="681" y="62.500" width="21" height="8" fill="#c3cadb" stroke="#a9b4cd" stroke-width=".8"/><path d="M681 65H702M681 67.500H702M685.200 65V70.500M689.400 65V70.500M693.600 65V70.500M697.800 65V70.500" stroke="#fff" stroke-width=".8"/>
<rect x="677.500" y="71.500" width="29" height="9.500" rx="2" fill="#c3cadb" stroke-width="1.300"/><path d="M680.500 72V80.500" stroke="#fff" stroke-width="1.500"/><path d="M681 74H706" stroke="#e8ecf4" stroke-width="1"/>
<!-- portal frame (highlighted) -->
<path d="M716 67.500Q720.500 69.500 721.300 62L721.300 69.500ZM746 67.500Q741.500 69.500 740.700 62L740.700 69.500Z" fill="#98a4b8" stroke="none"/><path d="M721.300 69.500Q731 84 740.700 69.500Z" fill="#98a4b8" stroke="none"/>
<path d="M721.300 69.500L718.500 88.500H721.300ZM740.700 69.500L743.500 88.500H740.700Z" fill="#98a4b8" stroke="none"/>
<path d="M721.300 88.500V69.500H740.700V88.500M718 88.800H725M737 88.800H744" stroke-width="1.300"/>
<!-- table + I beam -->
<rect x="681" y="101" width="21" height="8" fill="#c3cadb" stroke="#a9b4cd" stroke-width=".8"/><path d="M681 103.500H702M681 106H702M685.200 103.500V109M689.400 103.500V109M693.600 103.500V109M697.800 103.500V109" stroke="#fff" stroke-width=".8"/>
<path d="M708 109.500H680L677.500 111.500L681 114.500V120.500L677.500 123.500L683 129.500H708" fill="#dfe4ee" stroke-width="1.300"/><path d="M708 114.500H681M708 120.500H681M677.500 123.500H708" stroke-width="1"/><path d="M681.500 110.500H708V114H682.500Z" fill="#fff" stroke="none"/>
<!-- beam arc -->
<path d="M723 101.500A13 13 0 0 1 724 127.500" stroke-width="1.300"/><path d="M719.500 101.500L724.500 98.800V104.200Z" fill="#1b4f8c" stroke-width=".5"/>
<g stroke="#8ea0c4" stroke-width="1.100" fill="#8ea0c4"><path d="M729 105V121M727 119.500H731L729 123Z"/><path d="M724 115H740M739.500 113V117L743.500 115Z"/></g>
<path d="M715.500 110.500H723.500Q725.500 110.500 725.500 112.500V117.500Q725.500 119 723.500 119H715.500" fill="#c3cadb" stroke-width="1.200"/>
<!-- As -->
<rect x="762" y="63" width="27" height="26" fill="#bcc5d9" stroke="none"/><g stroke="#d4dae8" stroke-width=".8"><path d="M767 63V89M772 63V89M777 63V89M782 63V89M787 63V89M762 68H789M762 73H789M762 78H789M762 83H789M762 88H789"/></g><ellipse cx="775.500" cy="76" rx="12" ry="11" fill="url(#glow2)" stroke="none"/>
<!-- grid pencil -->
<rect x="760" y="100.500" width="30" height="29" fill="#a9b4cd" stroke="none"/><g stroke="#8c9abc" stroke-width=".8"><path d="M764.300 100.500V129.500M768.600 100.500V129.500M772.900 100.500V129.500M777.200 100.500V129.500M781.500 100.500V129.500M785.800 100.500V129.500M760 104.600H790M760 108.800H790M760 113H790M760 117.200H790M760 121.400H790M760 125.600H790"/></g>
<path d="M774 115.500L775.300 111.300L784.500 102Q786 101 787.300 102.200Q788.400 103.500 787.300 105L778 114.200Z" fill="#fff" stroke-width="1.100"/><path d="M774 115.500L775 112.500L777 114.500Z" fill="#1b4f8c" stroke-width=".6"/><path d="M776.500 110.500L785 102M778 112L786.500 103.500" stroke-width=".7"/>
<!-- additional rebar -->
<rect x="819" y="69.500" width="16" height="5.300" fill="#8ea0c4" stroke="none"/><path d="M819 70H835" stroke-width="1.100"/><path d="M820 71V74.500M822 71V74.500M824 71V74.500M826 71V74.500M828 71V74.500M830 71V74.500M832 71V74.500M834 71V74.500" stroke-width=".7"/><path d="M832 62.500V68.500M829 65.500H835" stroke-width="1.700"/>
<!-- punching shear -->
<rect x="819" y="99" width="16" height="4.500" fill="#fff" stroke="none"/><path d="M819 98.500H823V93.500M829.500 98.500H835M823 98.500V103M826.500 93V103" stroke="#5b78a8" stroke-width="1"/><path d="M822.500 88.500V93.500M826 88V93.500M823 94L828.500 91" stroke="#5b78a8" stroke-width="1"/><path d="M819 103.500H829" stroke="#8ea0c4" stroke-width="1"/><rect x="823.500" y="94" width="3" height="9" fill="#a9b4cd" stroke="none"/>
<!-- prestressed -->
<path d="M819 119.500L822.500 118V125L819 123.500Z" fill="#1b4f8c" stroke-width=".8"/><rect x="823" y="118" width="2" height="7" fill="#5b78a8" stroke="none"/><path d="M826 118.500Q829.500 116.500 831.500 118.500V124.500Q829.500 126.500 826 124.500Z" fill="#a9b4cd" stroke-width="1"/><rect x="832" y="119.500" width="2" height="4" fill="#5b78a8" stroke="none"/>
<!-- slab grid -->
<rect x="941" y="60.300" width="32" height="31.700" fill="#1a4a8c" stroke="none"/><g stroke="#e4ebf6" stroke-width=".7"><path d="M944.500 60.300V92M948.500 60.300V92M952.500 60.300V92M956.500 60.300V92M960.500 60.300V92M964.500 60.300V92M968.500 60.300V92M941 64H973M941 68H973M941 72H973M941 76H973M941 80H973M941 84H973M941 88H973"/></g><ellipse cx="957" cy="76" rx="15.500" ry="15.500" fill="url(#glow2)" stroke="none"/>
<!-- slab expand -->
<path d="M943.500 113.500L957 103.500L970.500 113.500V116.500L957 126.800L943.500 116.500Z" fill="#e4e8f0" stroke-width="1.200"/><path d="M943.500 113.500L957 103.500L970.500 113.500L957 123.500Z" fill="#98a4c0" stroke-width="1.200"/>
<g stroke-width="1"><path d="M942.500 102.500L950 108M971.500 102.500L964 108M942.500 128L950 122.500M971.500 128L964 122.500"/><path d="M942 105V102H945.500M972 105V102H968.500M942 125.500V128.500H945.500M972 125.500V128.500H968.500" fill="#1b4f8c" stroke-width="1.200"/><path d="M946 101.500L953 106.500M968 101.500L961 106.500M946 129L953 124M968 129L961 124" stroke-width=".7"/></g>
<!-- design recalc -->
<path d="M1012.500 68.500A13.200 13.200 0 1 0 1014.200 76" stroke-width="1.500"/><path d="M1008.500 66.500L1014.500 64.500V70.500Z" fill="#1b4f8c" stroke-width=".8"/>
<rect x="994" y="68.500" width="14.500" height="14.500" rx="1.500" fill="#a9b4cd" stroke-width="1.100"/><rect x="995.500" y="70" width="11.500" height="3.800" fill="#1b4f8c" stroke="none"/>
<g fill="#1b4f8c" stroke="none"><rect x="995.500" y="75" width="2.500" height="2"/><rect x="998.800" y="75" width="2.500" height="2"/><rect x="1002.100" y="75" width="2.500" height="2"/><rect x="1005.300" y="75" width="1.800" height="2"/><rect x="995.500" y="77.800" width="2.500" height="2"/><rect x="998.800" y="77.800" width="2.500" height="2"/><rect x="1002.100" y="77.800" width="2.500" height="2"/><rect x="1005.300" y="77.800" width="1.800" height="2"/><rect x="995.500" y="80.500" width="2.500" height="1.600"/><rect x="998.800" y="80.500" width="2.500" height="1.600"/><rect x="1002.100" y="80.500" width="2.500" height="1.600"/></g>
<!-- red play -->
<path d="M1032.200 65.900V86L1050.300 75.600Z" fill="#b81a00" stroke="none"/>
<!-- calc slash -->
<rect x="989" y="102" width="24.500" height="26" rx="2" fill="#dfe4ee" stroke="#8ea0c4" stroke-width="1.200"/>
<rect x="991.500" y="104.500" width="19.500" height="6" fill="#8ea0c4" stroke="none"/><path d="M991.500 104.500H1006L1004 110.500H991.500Z" fill="#1b4f8c" stroke="none"/>
<g stroke="none"><g fill="#1b4f8c"><rect x="991.500" y="113" width="3.800" height="3"/><rect x="996.600" y="113" width="3.800" height="3"/><rect x="991.500" y="117.500" width="3.800" height="3"/><rect x="996.600" y="117.500" width="3" height="3"/><rect x="991.500" y="122" width="3.800" height="3"/><rect x="996.600" y="122" width="1.500" height="3"/></g><g fill="#a9b4cd"><rect x="1002" y="113" width="3.800" height="3"/><rect x="1007" y="113" width="4" height="12"/><rect x="1002" y="117.500" width="3.800" height="3"/><rect x="1001" y="122" width="4.800" height="3"/></g></g>
<path d="M1007.500 99.500L995 129.500" stroke-width="1.500"/>
<!-- check / x -->
<path d="M1026.600 127.900L1052.900 101.600" stroke-width="1.100"/>
<path d="M1027.200 107.500L1032.200 114.500Q1036.500 106.500 1044.500 102.200" stroke="#0a8a30" stroke-width="2.600" stroke-linejoin="miter"/>
<path d="M1042.800 117.800L1052.800 127.800M1052.800 117.800L1042.800 127.800" stroke="#d81030" stroke-width="1.800"/>
<!-- BIM update -->
<g stroke="#000" stroke-width="2.200"><path d="M1193.500 68A13 13 0 1 0 1196 78.300" /><path d="M1214.500 70.300A13 13 0 1 0 1237 78.300"/><path d="M1231 65.300A13 13 0 0 0 1214.500 70.300" /></g>
<path d="M1189.300 66L1196.800 63.800L1196.300 72Z" fill="#000" stroke="none"/><path d="M1230.300 66L1237.800 63.800L1237.300 72Z" fill="#000" stroke="none"/>
<g stroke-width="2.300" stroke-linejoin="round"><path d="M1180.200 68.200L1185.200 73.200L1180.200 78.200L1175.200 73.200Z" stroke="#1010f0"/><path d="M1187 68.200L1192 73.200L1187 78.200L1182 73.200Z" stroke="#f01010"/><path d="M1179.400 74.500L1184.400 79.500L1179.400 84.500L1174.400 79.500Z" stroke="#f010f0"/><path d="M1186.800 74.500L1191.800 79.500L1186.800 84.500L1181.800 79.500Z" stroke="#10e0e8"/></g>
<!-- Forces inner -->
<g stroke="none"><path d="M1217.500 67.500H1233L1229.500 73H1214Z" fill="#1c60c0"/><path d="M1217.500 75H1233L1229.500 80.500H1214Z" fill="#1c60c0"/><ellipse cx="1224" cy="70.200" rx="3.200" ry="1.800" fill="#30b060"/><ellipse cx="1224" cy="77.700" rx="3.200" ry="1.800" fill="#30b060"/><circle cx="1224" cy="70.200" r=".9" fill="#e0c020"/><circle cx="1224" cy="77.700" r=".9" fill="#e0c020"/></g>
<path d="M1218.500 73V83.500M1222.500 73V83.500M1226.500 73V83.500M1230 73V82M1216.500 83.800H1220.500M1224.500 83.800H1228.500" stroke="#1c60c0" stroke-width="1"/>
<!-- Export -->
<g stroke-width="2.700" stroke-linejoin="round"><path d="M1256 69.500L1262 75.500L1256 81.500L1250 75.500Z" stroke="#1010f0"/><path d="M1264.500 69.500L1270.500 75.500L1264.500 81.500L1258.500 75.500Z" stroke="#f01010"/><path d="M1256 76.800L1262 82.800L1256 88.800L1250 82.800Z" stroke="#f010f0"/><path d="M1265 76.800L1271 82.800L1265 88.800L1259 82.800Z" stroke="#10c8d0"/></g>
<path d="M1265.800 71.500Q1267 65 1274 64.600" stroke="#000" stroke-width="2.300"/><path d="M1273 60.500L1278.500 64.800L1273 69Z" fill="#000" stroke="none"/>
</g>
<text x="775.800" y="82" font-family="Liberation Sans" font-weight="bold" font-size="15" fill="#1b4f8c" text-anchor="middle">A<tspan font-size="11" dy="2.500">s</tspan></text>
</svg>
<!-- main area background -->
<div class="a" style="left:5px;top:158px;width:324px;height:536px;background:#ece9e4"></div>
<!-- left panel 1 -->
<div class="a" style="left:5px;top:158px;width:318px;height:370px;background:#ece9e4;border:1px solid #fbfbfa;border-right-color:#b4af9f;border-bottom-color:#b4af9f"></div><div class="a" style="left:321px;top:159px;width:1px;height:367px;background:#fbfbfa"></div>
<div class="a" style="left:10px;top:163px;width:308px;height:21px;background:#d6d3ce"></div>
<span class="t" style="left:13px;top:167px">Foundation plans</span>
<div class="a" style="left:110px;top:186px;width:1px;height:21px;background:#c8c5c0"></div>
<div class="a" style="left:165px;top:186px;width:1px;height:21px;background:#c8c5c0"></div>
<div class="a" style="left:266px;top:186px;width:1px;height:21px;background:#c8c5c0"></div>
<!-- table -->
<div class="a" style="left:10px;top:208px;width:308px;height:315px;background:#fff;border:1px solid #828790"></div>
<div class="a" style="left:11px;top:209px;width:306px;height:24px;background:linear-gradient(#ffffff 0%,#ffffff 45%,#f1f2f4 100%);border-bottom:1px solid #d5d5d5"></div>
<div class="a" style="left:177px;top:209px;width:1px;height:24px;background:#dedfe1"></div>
<div class="a" style="left:11px;top:234px;width:306px;height:19px;background:#c9dde9;border-bottom:1px solid #a9c4d6;border-top:1px solid #dbe8f0"></div>
<div class="a" style="left:177px;top:234px;width:1px;height:19px;background:#b4cad8"></div>
<span class="t" style="left:18px;top:215px">Reference</span>
<span class="tc" style="left:246px;top:215px">Analytical model</span>
<span class="t" style="left:15px;top:237px">Foundations</span>
<span class="tc" style="left:246px;top:237px">Local</span>
<!-- splitter dots -->
<div class="a" style="left:157px;top:530px;width:14px;height:2px;background:repeating-linear-gradient(90deg,#555 0 2px,transparent 2px 4px)"></div>
<div class="a" style="left:325px;top:419px;width:2px;height:14px;background:repeating-linear-gradient(#555 0 2px,transparent 2px 4px)"></div>
<!-- left panel 2 -->
<div class="a" style="left:5px;top:534px;width:318px;height:158px;background:#ece9e4;border:1px solid #fbfbfa;border-top-color:#b4af9f;border-right-color:#b4af9f;border-bottom-color:#c9c6c0"></div><div class="a" style="left:321px;top:536px;width:1px;height:155px;background:#fbfbfa"></div><div class="a" style="left:6px;top:535px;width:316px;height:1px;background:#fbfbfa"></div>
<div class="a" style="left:30px;top:556px;width:288px;height:133px;background:#c0c0c0"></div>
<!-- h scrollbar -->
<div class="a" style="left:30px;top:539px;width:288px;height:17px;background:#ececec"></div>
<div class="a" style="left:46px;top:539px;width:256px;height:17px;background:linear-gradient(#e6e6e6,#efefef 40%,#ececec)"></div>
<div class="a" style="left:201px;top:540px;width:15px;height:15px;border:1px solid #8c8c8c;border-radius:2px;background:linear-gradient(#f8f8f8 0%,#ececec 50%,#d8d8d8 51%,#cfcfcf 100%)"></div>
<div class="a" style="left:36px;top:543px;width:0;height:0;border-top:4px solid transparent;border-bottom:4px solid transparent;border-right:4px solid #333"></div>
<div class="a" style="left:308px;top:543px;width:0;height:0;border-top:4px solid transparent;border-bottom:4px solid transparent;border-left:4px solid #333"></div>
<!-- v scrollbar -->
<div class="a" style="left:11px;top:599px;width:18px;height:90px;background:#f0f0f0"></div>
<div class="a" style="left:12px;top:633px;width:17px;height:15px;border:1px solid #8c8c8c;border-radius:2px;background:linear-gradient(90deg,#f8f8f8 0%,#ececec 50%,#d8d8d8 51%,#cfcfcf 100%)"></div>
<div class="a" style="left:16px;top:605px;width:0;height:0;border-left:4px solid transparent;border-right:4px solid transparent;border-bottom:4px solid #333"></div>
<div class="a" style="left:16px;top:678px;width:0;height:0;border-left:4px solid transparent;border-right:4px solid transparent;border-top:4px solid #333"></div>
<svg style="left:0;top:184px" width="330" height="26" viewBox="0 184 330 26">
<g stroke="#000" stroke-width="1" fill="#fff" stroke-linejoin="miter">
<path d="M16.500 190H24.500L28 193.500V202.500H16.500Z"/><path d="M24.500 190V193.500H28" fill="none"/>
<path d="M40.500 190H48.500L52 193.500V202.500H40.500Z"/>
<path d="M62.500 189.500H70L73 192.500V200.500H62.500Z" fill="#f4f080" stroke-dasharray="1 1"/><path d="M67 191.500H74.500L78 195V203.500H67Z"/><path d="M74.500 191.500V195H78" fill="none"/>
<path d="M89 190H96.500L100 193.500V202.500H89Z"/>
<path d="M172.500 190.500L184.500 189.500L188 192.500V203L172.500 202.500Z"/>
</g>
<path d="M22 192.500V200M18.500 196.200H25.500" stroke="#0a0ac0" stroke-width="1.500" fill="none"/>
<path d="M40 202.500L52.500 190" stroke="#e81010" stroke-width="2.800"/>
<path d="M89.500 196.500L92.500 194H100.500V199H92.500Z" fill="#f0e020" stroke="#000" stroke-width="1"/><rect x="99" y="194.300" width="2.500" height="4.500" fill="#e02020"/>
<path d="M124.400 189L131 196H127.500V203H121.300V196H117.800Z" fill="#0010f8"/>
<path d="M148.300 203.500L154.900 196.500H151.400V189.500H145.200V196.500H141.700Z" fill="#0010f8"/>
<g font-family="Liberation Sans" font-size="5.500" font-weight="bold" fill="#222"><text x="173.500" y="196" textLength="12.500" lengthAdjust="spacingAndGlyphs">DXF</text><text x="173.500" y="201.500" textLength="12.500" lengthAdjust="spacingAndGlyphs">DWG</text></g>
<g font-family="Liberation Sans" font-size="5.500" font-weight="bold" fill="#8c1010"><text x="196" y="193.500" textLength="11.500" lengthAdjust="spacingAndGlyphs">DXF</text><text x="196" y="204" textLength="11.500" lengthAdjust="spacingAndGlyphs">DWG</text></g>
<path d="M198 196.500H206M203.500 194.500L206 196.500L203.500 198.500" stroke="#e01010" stroke-width="1" fill="none"/>
<path d="M207.500 189.500H212.500V203.500H207.500Z" fill="#888" stroke="#333" stroke-width=".6"/><path d="M207.500 192H212.500M207.500 194.500H212.500M207.500 197H212.500M207.500 199.500H212.500M207.500 202H212.500" stroke="#222" stroke-width="1"/>
<path d="M276.500 199.500L282.500 193L288.500 199.500Z" fill="#000"/><path d="M299.500 193.500L305.500 200L311.500 193.500Z" fill="#000"/>
</svg>
<svg style="left:0;top:534px" width="330" height="160" viewBox="0 534 330 160">
<!-- side icons -->
<path d="M18.500 542V550M18.500 550L13 555.800M18.500 550L26.800 554.600" stroke="#3a7a9a" stroke-width="1.300" fill="none"/>
<text x="20" y="572.300" font-family="Liberation Sans" font-weight="bold" font-size="9.500" fill="#2a6a8a" text-anchor="middle" textLength="12" lengthAdjust="spacingAndGlyphs">3D</text>
<path d="M13.500 565.500Q19.500 560 26 563.500M26.500 573Q20.500 578.500 14 575" stroke="#222" stroke-width="1.600" fill="none"/><path d="M24 560.800L27.500 564.800L22.800 565.600ZM16 577.700L12.500 573.700L17.200 572.900Z" fill="#222"/>
<path d="M19.700 581.500L26.800 583.500V590L19.700 596.400L13 590V583.500Z" fill="#a8dcf0" stroke="#111" stroke-width="1" stroke-linejoin="round"/><path d="M13 583.500L19.700 585.500L26.800 583.500M19.700 585.500V596.400" stroke="#111" stroke-width="1" fill="none"/><path d="M19.700 585.500L26.800 583.500V590L19.700 596.400Z" fill="#7cc4e4" stroke="none" opacity=".7"/>
<!-- triad -->
<path d="M44.500 672.500v2" stroke="#10c010" stroke-width="1"/><path d="M46 678h4" stroke="#e01010" stroke-width="1.200"/><path d="M46 676h4" stroke="#1030e0" stroke-width="1.200"/><path d="M43.500 674.500l2 2" stroke="#888" stroke-width=".8"/>
<!-- 3D building -->
<g>
<!-- foundation beams -->
<g stroke="#5cc4b4" stroke-width="3.200" fill="none" stroke-linecap="butt"><path d="M122.500 634L180 664L217.500 641"/><path d="M136.500 641.500L163 627M155.600 651L190 633M200.600 650L170 634M122.500 634L160 616L217.500 641" opacity=".55"/></g>
<!-- caps and piles -->
<g fill="#6468d2" stroke="none">
<path d="M118 632.500L123 630.500L127 633.500L122 636Z"/><rect x="121" y="635" width="1.600" height="6"/><rect x="124" y="634" width="1.400" height="5"/>
<path d="M131 640L137 637.500L142 640.500L136.500 643.500Z"/><rect x="133" y="642" width="1.600" height="7"/><rect x="136.500" y="643" width="1.600" height="7.500"/><rect x="139.500" y="641.500" width="1.400" height="6"/>
<path d="M150 649.500L156 647L161.500 650L155.500 653Z"/><rect x="152" y="651.500" width="1.600" height="7"/><rect x="155.500" y="652.500" width="1.600" height="8"/><rect x="158.500" y="651" width="1.400" height="6.500"/>
<path d="M174 662L180 659L186 662L180 665.500Z"/><rect x="176.500" y="664" width="1.700" height="8"/><rect x="180" y="665" width="1.700" height="9"/><rect x="183" y="663.500" width="1.500" height="7"/>
<path d="M195 649L201 646L207 649L201 652.500Z"/><rect x="197.500" y="651" width="1.600" height="7"/><rect x="201" y="652" width="1.600" height="7.500"/><rect x="204" y="650.500" width="1.400" height="6"/>
<path d="M212 640L217.500 637.500L222.500 640L217.500 643Z"/><rect x="214.500" y="642" width="1.500" height="6"/><rect x="218" y="642.500" width="1.500" height="6"/>
</g>
<g fill="#8cc0e8" opacity=".7"><path d="M139 626L146 623.500L150 626L143 629Z"/><rect x="141.500" y="628" width="1.200" height="6"/><rect x="144.500" y="628" width="1.200" height="5"/><path d="M188 632L195 629.500L199 632L192 635Z"/><rect x="190" y="634" width="1.200" height="6"/><rect x="193.500" y="634" width="1.200" height="5"/></g>
<!-- back columns -->
<g stroke="#c8783c" stroke-width="1.700" fill="none"><path d="M140.200 582.800L143.100 632.600M195.800 573.200L193.900 632.600M175.700 570.500V580"/></g>
<!-- core -->
<path d="M156.500 572.500H185.200V613.500L170 618L156.500 612Z" fill="#dcb494"/><path d="M156.500 572.500H170V618L156.500 612Z" fill="#e4c0a4"/>
<!-- slabs (back to front, bottom to top) -->
<g fill="#92cdee" fill-opacity=".62" stroke="#7fb4d0" stroke-width=".5" stroke-opacity=".7">
<path d="M121.500 619.500L180 648L218.800 628.800L163 606Z"/>
<path d="M120 608.700L180 632.600L219.600 615.400L162.500 596Z"/>
<path d="M118.500 597.200L180 614.400L220.500 602L162 586.500Z"/>
<path d="M115.300 585.100L180 595.300L224.500 587L163.200 578.500Z"/>
<path d="M149 570.500H201.500L199 572.500H152Z"/>
</g>
<g stroke="#6f9cb4" stroke-width=".8" fill="none"><path d="M180 595.300L224.500 587M180 614.400L220.500 602M180 632.600L219.600 615.400M180 648L218.800 628.800"/></g>
<!-- front columns -->
<g stroke="#c8600c" stroke-width="2" fill="none"><path d="M116.900 585.700L122.600 633.600M132.600 587.600L136.400 641.200M153.300 590.900L155.600 650.800M180 595.300L179.500 663.300M204.400 590.500L200.600 649.900M221.600 587.600L216.900 640.300"/></g>
<g stroke="#e08830" stroke-width=".7" fill="none"><path d="M116.300 585.700L122 633.600M132 587.600L135.800 641.200M152.700 590.900L155 650.800M179.400 595.300L178.900 663.300"/></g>
</g>
</svg>
<!-- drawing canvas -->
<div class="a" style="left:329px;top:158px;width:956px;height:536px;background:#fff"></div>
<svg style="left:329px;top:158px" width="956" height="536" viewBox="329 158 956 536">
<defs>
<clipPath id="cv"><rect x="329" y="158" width="956" height="536"/></clipPath>
<g id="dy">
<path d="M763.8 276.3V267Q818.5 213 873 267.3V276.3Z"/>
<path d="M745 286Q753.5 307 745 327.5Z"/>
<path d="M616.4 349.8V323.3C628 313 640 311.5 650 312C672 313 690 330 708 349.8Z"/>
<path d="M780.5 349.8Q821 309.5 861.5 349.8Z"/>
<path d="M929.4 349.8C940 336 955 322 972.2 314.5C976 313.3 978 313.2 980 313.2H996.6L1003.2 314.8L1019.4 322.9V349.8Z"/>
<path d="M598.3 359.8H603C618 375 622 392 620.5 405C619 425 610 441 598.3 451.8Z"/>
<path d="M625.4 496.3Q666.6 460 707.8 496.3Z"/>
<path d="M741.3 417.7L729.8 496.3H741.3Z"/>
<path d="M893 443.7L907.2 496.3H893Z"/>
<path d="M893 442.5L914.5 447.5H893Z"/>
<path d="M929 496.3Q970 460 1011 496.3Z"/>
<path d="M1037.5 359.8H1042C1057 372 1065 388 1064 402C1062.5 422 1051 440 1037.5 452.3Z"/>
<path d="M1037.5 531C1060 548 1080 570 1080.5 592C1080.5 604 1078 614 1074.8 622.7H1037.5Z"/>
<path d="M598.3 527.6C614 538 632 562 636.2 590C636.5 603 630 618 616.5 633.6H598.3Z"/>
<path d="M616.6 643V617.9L632.2 609.8C640 607.5 647 607 653 607.2C672 608 695 622 712.5 643Z"/>
<path d="M784 643Q820.5 620 857 643Z"/>
<path d="M924.7 643C945 622 965 609.5 984.5 609.3L1000.3 609.5L1021.5 618.7V643Z"/>
<path d="M891 496.3H864.7L847 499L772 499.5L797.7 506L781.9 507.5L791 513H686C700 532 730 558 780 582C820 600 860 615 891 624.3Z"/>
</g>
<g id="dr">
<path d="M891 286H886Q866.7 306.3 835.4 327.3H891Z"/>
<path d="M708 349.8C716 360 731 378 744.2 406.4C757 378 772 360 780.5 349.8Z"/>
<path d="M861.5 349.8C872 360 886 374 891.8 409.3C898 390 916 366 929.4 349.8Z"/>
<path d="M891 371.8H819L827.2 378.1L836 386.3L844.8 396.4L851.6 406.6L856.4 414.8L859.1 425.7L860.5 435.2L873.4 436.5L878.8 440.6L887 441.7H891Z"/>
<path d="M598.3 451.3L566.8 478.2H598.3Z"/>
<path d="M616.5 496.3V502.5L625.4 496.3Z"/>
<path d="M707.4 496.3L718.6 507L729.8 496.3Z"/>
<path d="M908.5 496.3L914.5 511L929 496.3Z"/>
<path d="M1011 496.3L1019.8 502.5V496.3Z"/>
<path d="M1037.5 452.5L1005.5 478.2H1037.5Z"/>
<path d="M1019.8 514.4L1037.5 531V514.4Z"/>
<path d="M581.4 514.4L598.3 527.6V514.4Z"/>
<path d="M712.5 643Q719 650 723.8 658.5L725.6 643Z"/>
<path d="M763.8 643L763.3 662.8L784 643Z"/>
<path d="M857 643L873.3 653.5V643Z"/>
<path d="M909.6 643L909.2 663L924.7 643Z"/>
</g>
</defs>
<g clip-path="url(#cv)">
<path d="M341.5 158V694M360.5 158V694M378.5 158V694M396.5 158V694M415.5 158V694M433.5 158V694M451.5 158V694M470.5 158V694M488.5 158V694M506.5 158V694M524.5 158V694M543.5 158V694M561.5 158V694M579.5 158V694M598.5 158V694M616.5 158V694M634.5 158V694M653.5 158V694M671.5 158V694M689.5 158V694M708.5 158V694M726.5 158V694M744.5 158V694M763.5 158V694M781.5 158V694M799.5 158V694M818.5 158V694M836.5 158V694M854.5 158V694M873.5 158V694M891.5 158V694M909.5 158V694M928.5 158V694M946.5 158V694M964.5 158V694M982.5 158V694M1001.5 158V694M1019.5 158V694M1037.5 158V694M1056.5 158V694M1074.5 158V694M1092.5 158V694M1111.5 158V694M1129.5 158V694M1147.5 158V694M1166.5 158V694M1184.5 158V694M1202.5 158V694M1221.5 158V694M1239.5 158V694M1257.5 158V694M1276.5 158V694M329 166.5H1285M329 185.5H1285M329 203.5H1285M329 221.5H1285M329 240.5H1285M329 258.5H1285M329 276.5H1285M329 295.5H1285M329 313.5H1285M329 331.5H1285M329 349.5H1285M329 368.5H1285M329 386.5H1285M329 404.5H1285M329 423.5H1285M329 441.5H1285M329 459.5H1285M329 478.5H1285M329 496.5H1285M329 514.5H1285M329 533.5H1285M329 551.5H1285M329 569.5H1285M329 588.5H1285M329 606.5H1285M329 624.5H1285M329 643.5H1285M329 661.5H1285M329 679.5H1285" stroke="#e7e7e7" stroke-width="1" fill="none"/>
<!-- slab -->
<rect x="720.1" y="435" width="195.7" height="78.2" fill="#c3c7d1" stroke="#111" stroke-width="1"/>
<!-- beams -->
<g fill="#7390bf" stroke="#151515" stroke-width="1">
<rect x="763.6" y="270.8" width="109.6" height="10.8"/>
<rect x="616.4" y="344.6" width="106" height="10.2"/><rect x="766.4" y="344.6" width="104" height="10.2"/><rect x="913.7" y="344.6" width="105.6" height="10.2"/>
<rect x="616.4" y="491.2" width="125" height="10.4"/><rect x="893.5" y="491.2" width="126.4" height="10.4"/>
<rect x="616.4" y="638.2" width="109.8" height="10"/><rect x="763.6" y="638.2" width="110" height="10"/><rect x="909.6" y="638.2" width="110.4" height="10"/>
<rect x="593.6" y="359.5" width="9.4" height="119.5"/><rect x="593.6" y="514.4" width="9.4" height="119.4"/>
<rect x="1033.4" y="359.7" width="8.8" height="118.6"/><rect x="1033.4" y="514.4" width="8.8" height="109.4"/>
<rect x="740.3" y="285.6" width="9.4" height="42"/>
<rect x="886.6" y="285.6" width="9" height="42"/><rect x="886.6" y="371.6" width="9" height="75.6"/><rect x="887.2" y="497" width="8.6" height="127.4"/>
</g>
<!-- pile caps -->
<g fill="#cbdacf" stroke="#111" stroke-width="1">
<rect x="579.2" y="340.4" width="37.2" height="19"/>
<rect x="726.2" y="267.2" width="37.4" height="18.4"/>
<rect x="873" y="267.2" width="37.2" height="18.2"/>
<rect x="1019.2" y="340.4" width="37.3" height="19.2"/>
<rect x="722.3" y="327.5" width="44.1" height="44.1"/>
<rect x="870.3" y="327.5" width="43.4" height="44.1"/>
<rect x="579.4" y="478.8" width="37.1" height="35.5"/>
<rect x="1019.8" y="478.4" width="37.1" height="36"/>
<rect x="579.6" y="633.7" width="36.9" height="18.6"/>
<rect x="726.1" y="624.3" width="37.5" height="36.8"/>
<rect x="873.4" y="624.3" width="36.3" height="37.2"/>
<path d="M1032.3 623.5H1045L1058 647.3L1053 656.8H1024.3L1019.7 647.3Z"/>
</g>
<!-- core walls -->
<path d="M741.3 447.4H747.4V493.6H888.8V447.4H893.5V498.6H741.3Z" fill="#e9c3c3" stroke="#333" stroke-width="0.8"/>
<!-- axes -->
<g stroke="#7a7a7a" stroke-width="1" fill="none">
<g stroke-dasharray="9 6 3 6">
<path d="M451.5 203.5V668M598.5 203.5V668M720.5 203.5V668M744.5 203.5V668M891.5 203.5V668M915.5 203.5V668M1037.5 203.5V668M1184.5 203.5V668"/>
<path d="M451.5 203.5H1180.5M451.5 276.5H1180.5M451.5 349.5H1180.5M451.5 398.5H1180.5M451.5 447.5H1180.5M451.5 496.5H1180.5M451.5 533.5H1180.5M451.5 643.5H1180.5M451.5 667.5H1180.5"/>
</g>
<path d="M598.5 188V203.5M720.5 188V203.5M744.5 188V203.5M891.5 188V203.5M915.5 188V203.5M1037.5 188V203.5M1184.5 188V203.5M437 203.5H451.5M437 276.5H451.5M437 349.5H451.5M437 398.5H451.5M437 447.5H451.5M437 496.5H451.5M437 533.5H451.5M437 643.5H451.5M437 667.5H451.5"/>
<g fill="#fff" stroke="#8a8a8a" stroke-dasharray="2.2 1"><circle cx="598.5" cy="182.5" r="5.2"/><circle cx="720.5" cy="182.5" r="5.2"/><circle cx="744.5" cy="182.5" r="5.2"/><circle cx="891.5" cy="182.5" r="5.2"/><circle cx="915.5" cy="182.5" r="5.2"/><circle cx="1037.5" cy="182.5" r="5.2"/><circle cx="1184.5" cy="182.5" r="5.2"/><circle cx="431.5" cy="447.5" r="5.2"/><circle cx="431.5" cy="496.5" r="5.2"/><circle cx="431.5" cy="533.5" r="5.2"/><circle cx="431.5" cy="643.5" r="5.2"/><circle cx="431.5" cy="667.5" r="5.2"/></g>
</g>
<g font-size="7.5" fill="#9fb4c8" text-anchor="middle" font-family="Liberation Sans"><text x="598.5" y="185.2">B</text><text x="720.5" y="185.2">C</text><text x="744.5" y="185.2">D</text><text x="891.5" y="185.2">E</text><text x="915.5" y="185.2">F</text><text x="1037.5" y="185.2">G</text><text x="1184.5" y="185.2">H</text><text x="431.5" y="450.2">3</text><text x="431.5" y="499.2">2</text><text x="431.5" y="536.2">6</text><text x="431.5" y="646.2">1</text><text x="431.5" y="670.2">-1</text></g>
<!-- diagram fills -->
<use href="#dy" fill="#ffff00" fill-opacity=".62" stroke="none"/>
<use href="#dr" fill="#ff0000" fill-opacity=".6" stroke="none"/>
<!-- diagram outlines -->
<use href="#dy" fill="none" stroke="#111" stroke-width="1" stroke-linejoin="round"/>
<use href="#dr" fill="none" stroke="#111" stroke-width="1" stroke-linejoin="round"/>
<!-- piles -->
<g fill="none" stroke="#111" stroke-width="1">
<circle cx="588.6" cy="350" r="3.7"/><circle cx="608" cy="350" r="3.7"/>
<circle cx="734.8" cy="276.4" r="3.7"/><circle cx="754.2" cy="276.4" r="3.7"/>
<circle cx="881.6" cy="276.4" r="3.7"/><circle cx="901" cy="276.4" r="3.7"/>
<circle cx="1028.2" cy="350" r="3.7"/><circle cx="1047.4" cy="350" r="3.7"/>
<circle cx="730.8" cy="335.4" r="3.8"/><circle cx="757" cy="335.4" r="3.8"/><circle cx="730.8" cy="361.5" r="3.8"/><circle cx="757" cy="361.5" r="3.8"/>
<circle cx="878" cy="335.4" r="3.8"/><circle cx="904.3" cy="335.4" r="3.8"/><circle cx="878" cy="361.5" r="3.8"/><circle cx="904.3" cy="361.5" r="3.8"/>
<circle cx="588.9" cy="487" r="3.7"/><circle cx="607.6" cy="487" r="3.7"/><circle cx="588.9" cy="505" r="3.7"/><circle cx="607.6" cy="505" r="3.7"/>
<circle cx="1029" cy="487" r="3.7"/><circle cx="1047.6" cy="487" r="3.7"/><circle cx="1029" cy="505" r="3.7"/><circle cx="1047.6" cy="505" r="3.7"/>
<circle cx="588.8" cy="643" r="3.7"/><circle cx="607.8" cy="643" r="3.7"/>
<circle cx="735.4" cy="633.4" r="3.7"/><circle cx="754" cy="633.4" r="3.7"/><circle cx="735.4" cy="651.6" r="3.7"/><circle cx="754" cy="651.6" r="3.7"/>
<circle cx="882" cy="633.4" r="3.7"/><circle cx="900.6" cy="633.4" r="3.7"/><circle cx="882" cy="651.6" r="3.7"/><circle cx="900.6" cy="651.6" r="3.7"/>
<circle cx="1037" cy="631.3" r="3.7"/><circle cx="1027.800" cy="648" r="3.7"/><circle cx="1047.200" cy="648" r="3.7"/>
<circle cx="730.7" cy="447" r="3.8"/><circle cx="760.8" cy="447" r="3.8"/><circle cx="875.8" cy="447" r="3.8"/><circle cx="904" cy="448" r="3.8"/>
<circle cx="730.7" cy="473.5" r="3.8"/><circle cx="760.8" cy="473.5" r="3.8"/><circle cx="875.8" cy="473.5" r="3.8"/><circle cx="904" cy="473.5" r="3.8"/>
<circle cx="730.7" cy="496.4" r="3.8"/><circle cx="760.8" cy="496.4" r="3.8"/><circle cx="875.8" cy="496.4" r="3.8"/><circle cx="904" cy="496.4" r="3.8"/>
</g>
<!-- columns -->
<g fill="#f0b9b5" stroke="#4a2a2a" stroke-width="0.9">
<rect x="594" y="345" width="8.5" height="10"/><circle cx="744.5" cy="276.4" r="4"/><circle cx="891" cy="276.4" r="4"/><rect x="1033" y="345" width="9" height="10"/>
<rect x="740" y="346" width="9.5" height="8"/><rect x="886.5" y="346" width="9.5" height="8"/>
<rect x="594" y="491" width="8.5" height="10.5"/><rect x="1033" y="491" width="9" height="10.5"/>
<rect x="594" y="638" width="8.5" height="10"/><rect x="740" y="638.5" width="9.5" height="8"/><rect x="886.5" y="638.5" width="9.5" height="8"/><rect x="1033" y="638" width="9" height="10"/>
</g>
<!-- column local axes -->
<g stroke-width="1" fill="none">
<path d="M598.5 340.5V345.0M744.5 267.5V272.0M891.5 267.5V272.0M1037.5 340.5V345.0M744.5 340.5V345.0M891.5 340.5V345.0M598.5 487.5V492.0M1037.5 487.5V492.0M598.5 634.5V639.0M744.5 634.5V639.0M891.5 634.5V639.0M1037.5 634.5V639.0M818 496V490M747.5 473.5h4M884.5 473.5h4" stroke="#1030e0"/>
<path d="M603.0 349.5h4.5M749.0 276.5h4.5M896.0 276.5h4.5M1042.0 349.5h4.5M603.0 496.5h4.5M1042.0 496.5h4.5M603.0 643.5h4.5M749.0 643.5h4.5M896.0 643.5h4.5M1042.0 643.5h4.5M819 496.5h5" stroke="#e01010"/>
</g>
<!-- tiny labels -->
<g font-family="Liberation Sans" font-size="5.6">
<g fill="#b4b45a" text-anchor="middle">
<text x="818.5" y="269" textLength="43" lengthAdjust="spacingAndGlyphs">VC4-V1 - 16 x 24 in</text>
<text x="818.3" y="342.7" textLength="43" lengthAdjust="spacingAndGlyphs">VC1-V1 - 16 x 24 in</text>
<text x="669" y="489.6" textLength="45" lengthAdjust="spacingAndGlyphs">VC15-V1 - 16 x 24 in</text>
<text x="964" y="489.6" textLength="47" lengthAdjust="spacingAndGlyphs">VC13-V1 - 16 x 24 in</text>
<text x="671.5" y="635" textLength="41" lengthAdjust="spacingAndGlyphs">VC9-V1 - 16 x 24 in</text>
<text x="964" y="635" textLength="47" lengthAdjust="spacingAndGlyphs">VC11-V1 - 16 x 24 in</text>
<text transform="translate(608.2 423.5) rotate(-90)" textLength="37" lengthAdjust="spacingAndGlyphs">VC7-V1 - 16 x 24 in</text>
<text transform="translate(608.5 569) rotate(-90)" textLength="42" lengthAdjust="spacingAndGlyphs">VC8-V1 - 16 x 24 in</text>
<text transform="translate(1048.2 421.5) rotate(-90)" textLength="40" lengthAdjust="spacingAndGlyphs">VC2-V1 - 16 x 24 in</text>
<text transform="translate(1048.5 569) rotate(-90)" textLength="42" lengthAdjust="spacingAndGlyphs">VC3-V1 - 16 x 24 in</text>
<text transform="translate(883.3 569) rotate(-90)" textLength="45" lengthAdjust="spacingAndGlyphs">VC12-V1 - 16 x 24 in</text>
<text x="611.9" y="631.5">E10</text><text x="1053.8" y="621.5">E2</text>
</g>
<g fill="#4a6cb8" text-anchor="middle">
<text transform="translate(755.8 310) rotate(-90)" textLength="34" lengthAdjust="spacingAndGlyphs">-V1 - 16 x 24 in</text>
<text transform="translate(901.3 310) rotate(-90)" textLength="34" lengthAdjust="spacingAndGlyphs">-V1 - 16 x 24 in</text>
<text transform="translate(901.6 399) rotate(-90)" textLength="47" lengthAdjust="spacingAndGlyphs">VC14-V1 - 16 x 24 in</text>
<text x="805" y="635" textLength="22" lengthAdjust="spacingAndGlyphs" fill="#5a7cc8">VC10-V1</text>
</g>
<g fill="#7f98c8" text-anchor="middle">
<text x="757.5" y="266.3">E11</text><text x="905" y="266.3">E12</text><text x="762.3" y="325.8">E7</text><text x="910.2" y="325.8">E9</text>
<text x="612.7" y="338.8">E8</text><text x="1052.8" y="338.6">E5</text><text x="613.1" y="477">E3</text><text x="1053" y="477">E4</text>
<text x="758.7" y="623">E1</text><text x="905.9" y="622.5">E6</text>
</g>
</g>
<!-- dotted value marks (tiny rotated text in target) -->
<g fill="none" stroke="#111" stroke-width="1.6" stroke-dasharray="1.3 1.1">
<path d="M651 318V342M816.4 246V270M651.2 613V636M981.4 613.2V637.8M816.2 628.3V645.7M761 261.5V283M723.5 637.7V658.7M761.3 640.8V662.8M907.4 641V664M718.6 505V513M912 497V512M888.2 368.4V391"/>
<path d="M737.5 470L740 448M889.2 452V473" stroke-width="1.3"/>
</g>
<g fill="none" stroke="#5a4a10" stroke-width="1.5" stroke-dasharray="1.2 .9 2 .9 1.4 .9">
<path d="M597.700 401.500H620.900M607 585.800H627.600M1037.800 401.800H1061.800M1047.500 594.700H1071M735.300 306H755.800M777.200 515H800.500M876 625.800H898M731 283H757M878 283H903M582 512H600M1021 512H1040"/>
</g>
<g fill="none" stroke="#7a1010" stroke-width="1.5" stroke-dasharray="1.2 .9 2 .9 1.400 .9">
<path d="M568 476H592M1007.700 476.400H1033.300M850.700 325.100H874.900M842.600 369H866.200"/>
</g>
<path d="M894.5 432V444" stroke="#111" stroke-width="1.6" fill="none"/>
<path d="M727 643.5H739.500M874 643.500H886.500M617 643.500H622" stroke="#40e0e0" stroke-width="1" fill="none"/>
<!-- cross -->
<path d="M802.3 474H833.6M818.1 458.6V489" stroke="#111" stroke-width="2" fill="none"/>
</g>
</svg>
<!-- Forces dialog -->
<div class="a" style="left:329px;top:158px;width:180px;height:244px;background:#b0281e;border:1px solid #8e140c;border-top-color:#a01a10"></div>
<div class="a" style="left:334px;top:183px;width:170px;height:214px;background:#ece9e4"></div>
<span class="tc" style="left:406px;top:167px;color:#fff">Forces</span>
<svg style="left:486px;top:168px" width="10" height="10" viewBox="0 0 10 10" stroke="#fff" stroke-width="1.5" fill="none"><path d="M0.5 0.5L9.5 9.5M9.5 0.5L0.5 9.5"/></svg>
<div class="dd" style="left:337px;top:189px;width:41px"></div>
<span class="t" style="transform:scaleX(.84);left:341px;top:192px">Mx</span><div class="arr" style="left:365px;top:198px"></div>
<span class="t" style="transform:scaleX(.84);left:383px;top:192px">X</span>
<div class="a" style="left:397px;top:189px;width:52px;height:20px;background:#fff;border:1px solid #3c8ce0"></div>
<span class="t" style="transform:scaleX(.84);left:420px;top:192px">0.100</span>
<svg style="left:465.500px;top:190.500px" width="16.500" height="16.500" viewBox="0 0 19 19"><circle cx="9.5" cy="9.5" r="8.5" fill="#1878c8" stroke="#0a5aa4" stroke-width="1"/><circle cx="9.5" cy="5.3" r="1.5" fill="#fff"/><path d="M7.5 8h3.2v5.3h1.3v1.4H7.2v-1.4h1.4V9.4H7.5z" fill="#fff"/></svg>
<div class="a" style="left:338px;top:226px;width:12px;height:12px;background:linear-gradient(135deg,#d8dce4,#f4f5f7);border:1px solid #6a7a90"></div>
<svg style="left:339px;top:227px" width="10" height="10" viewBox="0 0 10 10" fill="none" stroke="#3a4a9a" stroke-width="1.6"><path d="M1.8 5l2.2 2.8L8.2 1.6"/></svg>
<span class="t" style="transform:scaleX(.84);left:353px;top:225px">Fill Diagram</span>
<div class="a" style="left:338px;top:248px;width:12px;height:12px;background:linear-gradient(135deg,#d8dce4,#f4f5f7);border:1px solid #6a7a90"></div>
<svg style="left:339px;top:249px" width="10" height="10" viewBox="0 0 10 10" fill="none" stroke="#3a4a9a" stroke-width="1.6"><path d="M1.8 5l2.2 2.8L8.2 1.6"/></svg>
<span class="t" style="transform:scaleX(.84);left:353px;top:247px">Display maximum and minimum</span>
<div class="a" style="left:334px;top:271px;width:170px;height:16px;background:#d6d3ce"></div>
<span class="t" style="transform:scaleX(0.877);left:337px;top:273px">Load combination</span>
<div class="dd" style="left:337px;top:290px;width:164px;height:21px"></div><span class="t" style="transform:scaleX(0.893);left:341px;top:294px">Load case</span><div class="arr" style="left:488px;top:299px"></div>
<div class="dd" style="left:337px;top:316px;width:164px"></div><span class="t" style="transform:scaleX(0.89);left:341px;top:320px">Dead</span><div class="arr" style="left:488px;top:325px"></div>
<span class="t" style="transform:scaleX(0.869);left:337px;top:378px">Analytical model</span>
<div class="dd" style="left:425px;top:374px;width:76px"></div><span class="t" style="transform:scaleX(0.876);left:429px;top:378px">Local</span><div class="arr" style="left:488px;top:383px"></div>
</body></html>
